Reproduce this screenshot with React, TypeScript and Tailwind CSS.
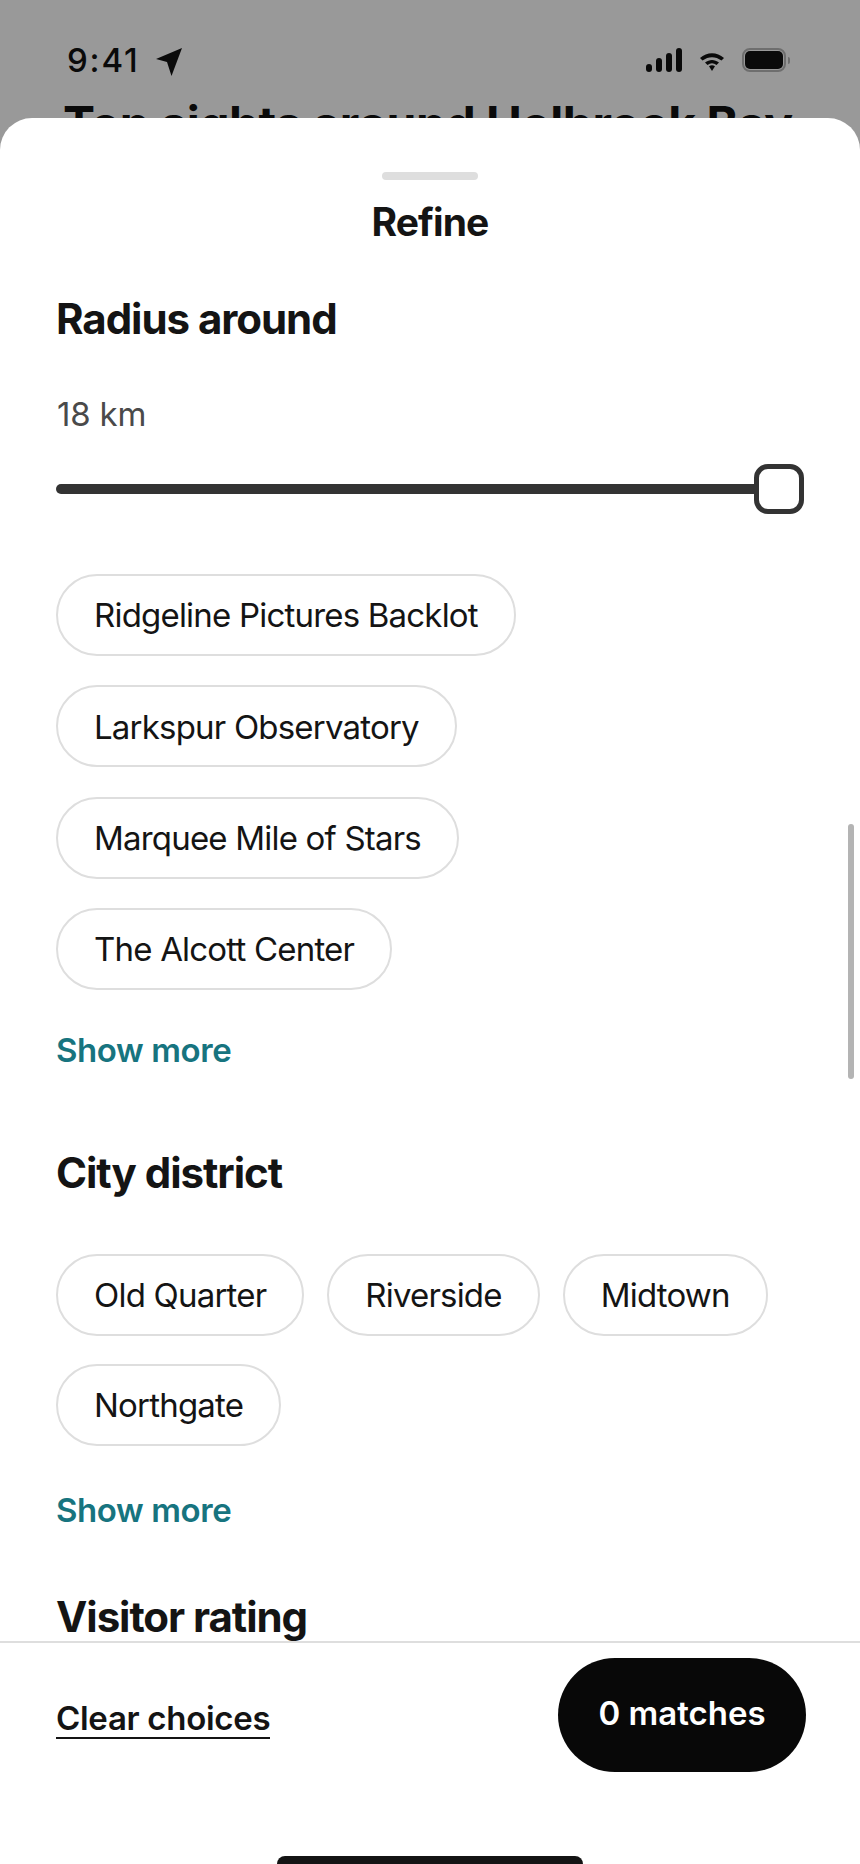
import React from 'react';

const font = "font-['Inter','Liberation_Sans',sans-serif]";

function Chip({ label }: { label: string }) {
  return (
    <div className="h-[82px] px-[36px] pt-[2px] flex items-center rounded-full border-2 border-[#dedede] text-[33px] tracking-[-0.8px] text-[#141414] whitespace-nowrap">
      {label}
    </div>
  );
}

function ShowMore() {
  return <div className="text-[33px] leading-[40px] font-semibold tracking-[-0.4px] text-[#17747f]">Show more</div>;
}

function SectionTitle({ children }: { children: React.ReactNode }) {
  return <h2 className="text-[42px] leading-[48px] font-bold tracking-[-1.05px] text-[#141414] whitespace-nowrap">{children}</h2>;
}

export default function App() {
  return (
    <div className={`relative w-[860px] h-[1864px] overflow-hidden bg-[#999999] ${font}`}>
      {/* page behind the sheet */}
      <div className="h-[48px]" />
      <div className="h-[28px] pl-[67px] pr-[70px] flex items-start justify-between">
        <div className="flex items-start gap-[16px]">
          <span className="text-[33px] leading-[24px] font-medium tracking-[1.8px] text-[#0a0a0a]">9:41</span>
          <svg width="26" height="28" viewBox="0 0 26 28">
            <path d="M26 0 L0 11 L11 14 L15.5 28 Z" fill="#0a0a0a" />
          </svg>
        </div>
        <div className="flex items-start gap-[18px]">
          <svg width="36" height="24" viewBox="0 0 36 24" fill="#0a0a0a">
            <rect x="0" y="16" width="6" height="8" rx="3" />
            <rect x="10" y="10" width="6" height="14" rx="3" />
            <rect x="20" y="5" width="6" height="19" rx="3" />
            <rect x="30" y="0" width="6" height="24" rx="3" />
          </svg>
          <svg className="mt-[5px]" width="24" height="18" viewBox="0 0 24 18" fill="#0a0a0a">
            <path d="M0 5 C7 -1.5 17 -1.5 24 5 L21.5 7.5 C15.5 3 8.5 3 2.5 7.5 Z" />
            <path d="M5 9.5 C9.5 6 14.5 6 19 9.5 L16.5 12 C13.5 9.8 10.5 9.8 7.5 12 Z" />
            <path d="M9 13.2 C11 12 13 12 15 13.2 L12 18 Z" />
          </svg>
          <div className="flex items-center gap-[2px] h-[24px]">
            <div className="w-[44px] h-[24px] rounded-[8px] border-2 border-[#6e6e6e] p-[1px]">
              <div className="w-full h-full rounded-[5px] bg-[#0a0a0a]" />
            </div>
            <div className="w-[2px] h-[7px] rounded-r-full bg-[#6e6e6e]" />
          </div>
        </div>
      </div>
      <div className="mt-[22px] pl-[63px] text-[48px] leading-[52px] font-bold tracking-[-0.5px] text-[#0a0a0a] whitespace-nowrap">
        Top sights around Holbrook Bay
      </div>

      {/* bottom sheet */}
      <div className="absolute left-0 right-0 top-[118px] bottom-0 bg-white rounded-t-[32px] flex flex-col overflow-hidden">
        <div className="flex-1 min-h-0 overflow-hidden relative">
          <div className="mt-[54px] mx-auto w-[96px] h-[8px] rounded-full bg-[#dedede]" />
          <div className="mt-[20px] text-center text-[39px] leading-[44px] font-bold tracking-[-0.9px] text-[#141414]">Refine</div>

          <div className="px-[56px]">
            <div className="mt-[51px]"><SectionTitle>Radius around</SectionTitle></div>
            <div className="mt-[51px] ml-[1px] text-[33px] leading-[40px] tracking-[-0.2px] text-[#4a4a4a]">18 km</div>
            <div className="mt-[30px] h-[50px] w-[748px] flex items-center">
              <div className="h-[10px] flex-1 rounded-l-full bg-[#333333]" />
              <div className="w-[50px] h-[50px] rounded-[14px] border-[5px] border-[#333333] bg-white" />
            </div>

            <div className="mt-[60px] flex flex-col items-start gap-[29.4px]">
              <Chip label="Ridgeline Pictures Backlot" />
              <Chip label="Larkspur Observatory" />
              <Chip label="Marquee Mile of Stars" />
              <Chip label="The Alcott Center" />
            </div>
            <div className="mt-[40px]"><ShowMore /></div>

            <div className="mt-[79px]"><SectionTitle>City district</SectionTitle></div>
            <div className="mt-[57px] flex flex-wrap gap-x-[23px] gap-y-[28px] w-[748px]">
              <Chip label="Old Quarter" />
              <Chip label="Riverside" />
              <Chip label="Midtown" />
              <Chip label="Northgate" />
            </div>
            <div className="mt-[44px]"><ShowMore /></div>

            <div className="mt-[63px]"><SectionTitle>Visitor rating</SectionTitle></div>
          </div>

          {/* scrollbar */}
          <div className="absolute right-[6px] top-[706px] w-[6px] h-[255px] rounded-full bg-[#b4b4b4]" />
        </div>

        <div className="h-[223px] border-t-2 border-[#dedede] px-[56px] relative">
          <div className="pt-[15px] flex items-center justify-between">
            <div className="text-[33px] leading-[37px] font-semibold tracking-[-0.3px] text-[#141414] border-b-2 border-[#141414] mt-[9px]">Clear choices</div>
            <div className="w-[248px] h-[114px] -mr-[2px] pb-[2px] rounded-full bg-[#080808] flex items-center justify-center text-[33px] font-semibold text-white">0 matches</div>
          </div>
          <div className="absolute left-[277px] bottom-0 w-[306px] h-[8px] rounded-t-full bg-[#141414]" />
        </div>
      </div>
    </div>
  );
}
